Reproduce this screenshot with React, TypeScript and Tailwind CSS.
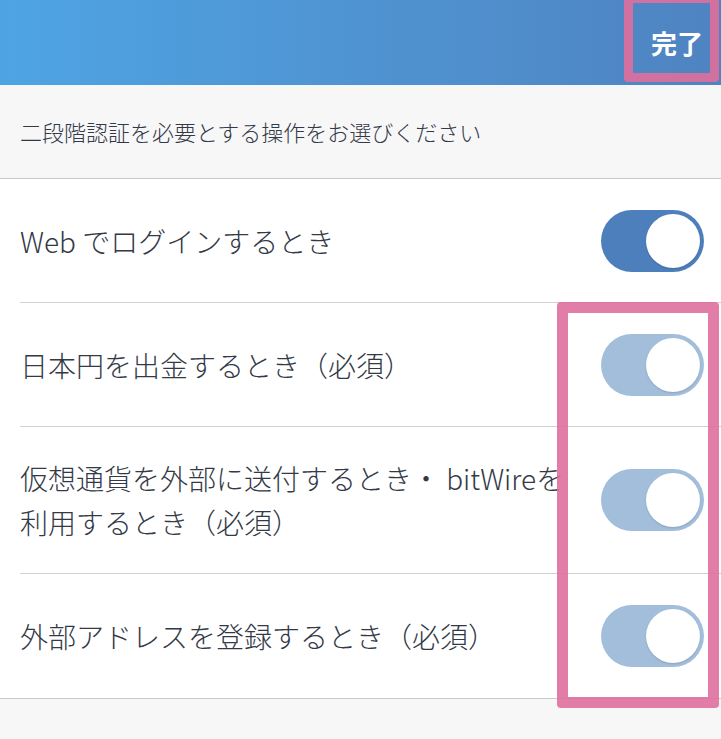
import React from "react";

const rows = [
  { label: ["Web でログインするとき"], locked: false },
  { label: ["日本円を出金するとき（必須）"], locked: true },
  { label: ["仮想通貨を外部に送付するとき・ bitWireを", "利用するとき（必須）"], locked: true },
  { label: ["外部アドレスを登録するとき（必須）"], locked: true },
];

function Toggle({ locked }: { locked: boolean }) {
  return (
    <div
      className={
        "flex h-[62px] w-[103px] shrink-0 items-center justify-end rounded-full pr-[4px] " +
        (locked ? "bg-[#a3bedb]" : "bg-[#4d7fbc]")
      }
    >
      <div className="h-[54px] w-[54px] rounded-full bg-white shadow-[0_1px_2px_rgba(0,0,0,0.15)]" />
    </div>
  );
}

export default function App() {
  return (
    <div
      className="relative h-[739px] w-[721px] overflow-hidden bg-[#f7f7f8] text-[#333946]"
      style={{ fontFamily: '"Noto Sans CJK JP", "Noto Sans", sans-serif' }}
    >
      <header className="flex h-[85px] items-center justify-end bg-gradient-to-r from-[#4ea4e3] to-[#4f83c1] pr-[18px]">
        <span className="text-[26px] font-bold text-white">完了</span>
      </header>

      <div className="flex h-[94px] items-center border-b border-[#c9c9cc] px-[20px] text-[22px] font-light">
        二段階認証を必要とする操作をお選びください
      </div>

      <div className="border-b border-[#c9c9cc] bg-white">
        {rows.map((r, i) => (
          <div
            key={i}
            className={
              "ml-[20px] flex items-center justify-between pr-[17px] " +
              (i < rows.length - 1 ? "border-b border-[#d2d2d5] " : "") +
              (r.label.length > 1 ? "h-[147px]" : "h-[124px]")
            }
          >
            <div className="w-[560px] overflow-hidden whitespace-nowrap text-[28px] font-light leading-[44px]">
              {r.label.map((line, j) => (
                <div key={j}>{line}</div>
              ))}
            </div>
            <Toggle locked={r.locked} />
          </div>
        ))}
      </div>

      <div className="pointer-events-none absolute left-[624px] top-[-6px] h-[88px] w-[95px] rounded-[4px] border-[9px] border-[#de6f9c] opacity-90" />
      <div className="pointer-events-none absolute left-[557px] top-[302px] h-[406px] w-[162px] rounded-[4px] border-[11px] border-[#de6f9c] opacity-90" />
    </div>
  );
}
